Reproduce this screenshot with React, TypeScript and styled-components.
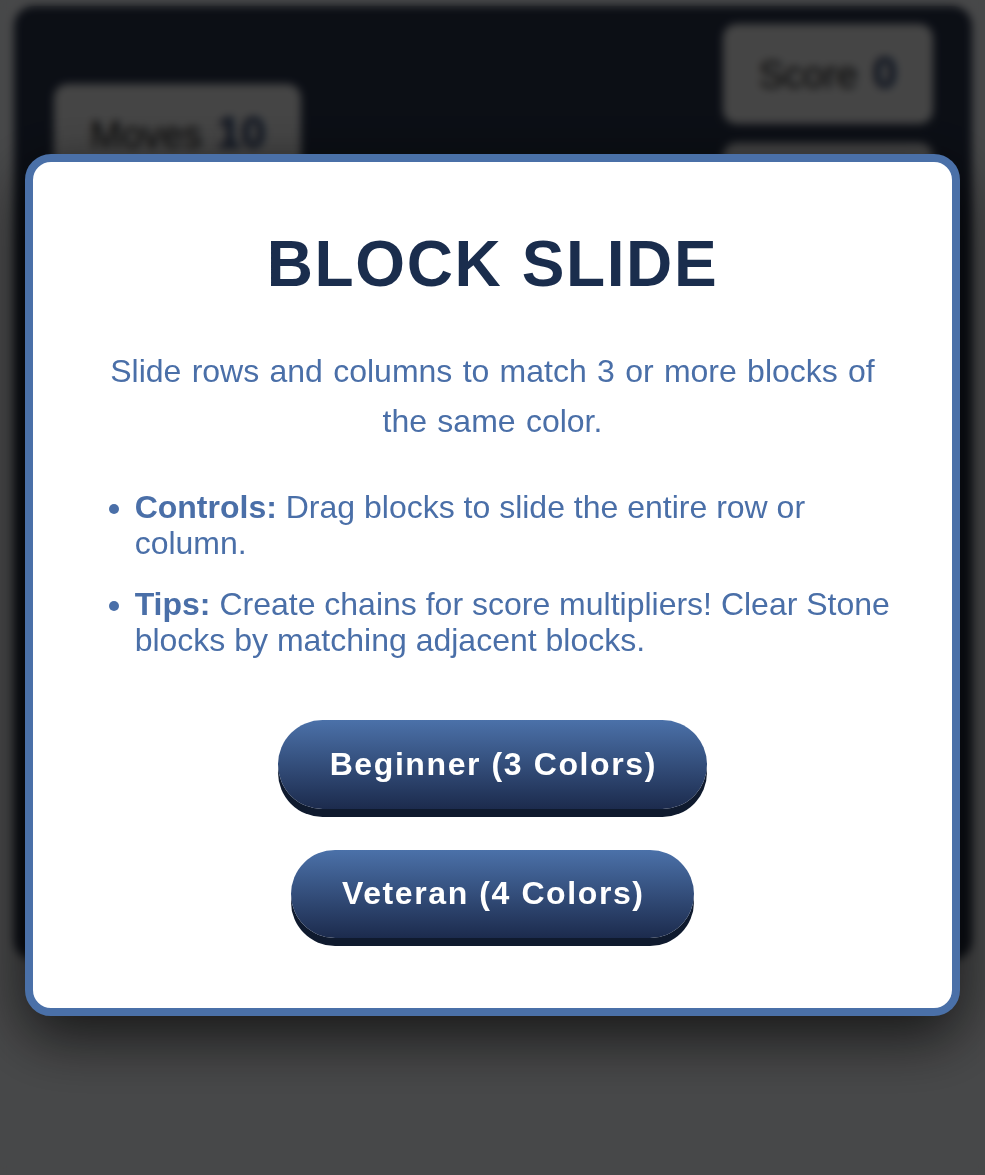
import styled, { createGlobalStyle } from "styled-components";

const GlobalStyle = createGlobalStyle`
  html, body {
    margin: 0;
    padding: 0;
  }
  body {
    background: #eef0f3;
    font-family: "Liberation Sans", Arial, Helvetica, sans-serif;
  }
`;

function Stat({ label, value }: { label: string; value: number }) {
  return (
    <StatBox>
      {label} <StatValue>{value}</StatValue>
    </StatBox>
  );
}

function App() {
  return (
    <>
      <GlobalStyle />
      <Page>
        <Board>
          <Header>
            <Stat label="Moves" value={10} />
            <StatColumn>
              <Stat label="Score" value={0} />
              <Stat label="Best" value={0} />
            </StatColumn>
          </Header>
        </Board>
      </Page>

      <Overlay>
        <Modal>
          <Title>BLOCK SLIDE</Title>
          <Intro>
            Slide rows and columns to match 3 or more blocks of the same color.
          </Intro>
          <Rules>
            <li>
              <strong>Controls:</strong> Drag blocks to slide the entire row or
              column.
            </li>
            <li>
              <strong>Tips:</strong> Create chains for score multipliers! Clear
              Stone blocks by matching adjacent blocks.
            </li>
          </Rules>
          <Levels>
            <LevelButton>Beginner (3 Colors)</LevelButton>
            <LevelButton>Veteran (4 Colors)</LevelButton>
          </Levels>
        </Modal>
      </Overlay>
    </>
  );
}

const Page = styled.div`
  min-height: 100vh;
  box-sizing: border-box;
  padding: 6px 13px 0 14px;
`;

const Board = styled.div`
  height: 954px;
  box-sizing: border-box;
  padding: 18px 39px 0 40px;
  border-radius: 20px;
  background: #283248;
`;

const Header = styled.div`
  display: flex;
  justify-content: space-between;
  align-items: center;
`;

const StatColumn = styled.div`
  display: flex;
  flex-direction: column;
  gap: 19px;
`;

const StatBox = styled.div`
  padding: 27px 36px;
  border-radius: 14px;
  background: #e8e8e8;
  color: #151515;
  font-size: 38px;
  line-height: 44px;
`;

const StatValue = styled.span`
  margin-left: 4px;
  color: #1f3560;
  font-size: 44px;
  font-weight: 700;
`;

const Overlay = styled.div`
  position: fixed;
  inset: 0;
  display: flex;
  align-items: center;
  justify-content: center;
  padding-bottom: 5px;
  box-sizing: border-box;
  background: rgba(0, 0, 0, 0.7);
  backdrop-filter: blur(4px);
`;

const Modal = styled.div`
  width: 95%;
  box-sizing: border-box;
  padding: 65px 60px 70px;
  border: 8px solid #4a70a8;
  border-radius: 26px;
  background: #fff;
  box-shadow: 0 20px 60px rgba(0, 0, 0, 0.7);
  text-align: center;
`;

const Title = styled.h1`
  margin: 0 0 45px;
  color: #1a2d4d;
  font-size: 64px;
  font-weight: 700;
  line-height: normal;
  letter-spacing: 1.6px;
`;

const Intro = styled.p`
  margin: 0 0 43px;
  color: #4a6fa8;
  font-size: 32px;
  line-height: 50px;
  word-spacing: 1.4px;
`;

const Rules = styled.ul`
  margin: 0 0 62px;
  padding-left: 42px;
  color: #4a6fa8;
  font-size: 32px;
  line-height: 36px;
  text-align: left;

  li + li {
    margin-top: 25px;
  }
`;

const Levels = styled.div`
  display: flex;
  flex-direction: column;
  align-items: center;
  gap: 41px;
`;

const LevelButton = styled.button`
  padding: 0.8em 1.55em 0.8em 1.6em;
  border: none;
  border-radius: 999px;
  background: linear-gradient(180deg, #4b71a9 0%, #1c2b4d 100%);
  box-shadow: 0 8px 0 #0f1a2e;
  color: #fff;
  font-family: inherit;
  font-size: 32px;
  font-weight: 700;
  line-height: normal;
  letter-spacing: 1.6px;
  cursor: pointer;
`;

export default App;
